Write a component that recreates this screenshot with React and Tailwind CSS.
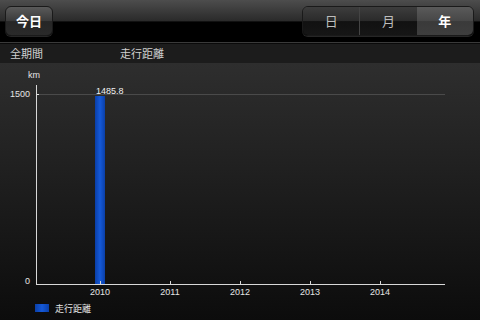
const years = [2010, 2011, 2012, 2013, 2014];

const Chart = () => {
  const x0 = 36;
  const yTop = 31;
  const yBase = 221;
  return (
    <svg width="480" height="257" className="block" style={{ fontFamily: '"Liberation Sans", Arial, sans-serif' }}>
      <defs>
        <linearGradient id="bar" x1="0" x2="1" y1="0" y2="0">
          <stop offset="0" stopColor="#0a3fa8" />
          <stop offset="0.5" stopColor="#1559d8" />
          <stop offset="1" stopColor="#0a3fa8" />
        </linearGradient>
      </defs>
      <text x="28" y="15" fill="#e5e5e5" fontSize="9">km</text>
      <text x="30" y="34" fill="#e5e5e5" fontSize="9" textAnchor="end">1500</text>
      <line x1={x0} x2="445" y1={yTop + 0.5} y2={yTop + 0.5} stroke="#4a4a4a" strokeWidth="1" />
      <line x1={x0} x2={x0 + 3} y1={yTop + 0.5} y2={yTop + 0.5} stroke="#e5e5e5" strokeWidth="1" />
      <text x="30" y="221" fill="#e5e5e5" fontSize="9" textAnchor="end">0</text>
      <rect x="95" y="33" width="10" height={yBase - 33} fill="url(#bar)" />
      <text x="96" y="31" fill="#f0f0f0" fontSize="9">1485.8</text>
      <line x1={x0 + 0.5} x2={x0 + 0.5} y1="22" y2={yBase} stroke="#d8d8d8" strokeWidth="1" />
      <line x1={x0} x2="445" y1={yBase + 0.5} y2={yBase + 0.5} stroke="#d8d8d8" strokeWidth="1" />
      {years.map((y, i) => {
        const cx = 100 + i * 70;
        return (
          <g key={y}>
            <line x1={cx + 0.5} x2={cx + 0.5} y1={yBase - 3} y2={yBase} stroke="#d8d8d8" strokeWidth="1" />
            <text x={cx} y={yBase + 11} fill="#e5e5e5" fontSize="9" textAnchor="middle">{y}</text>
          </g>
        );
      })}
      <rect x="35" y="241" width="14" height="8" fill="url(#bar)" />
      <text x="55" y="249" fill="#e5e5e5" fontSize="9" style={{ fontFamily: '"Noto Sans CJK JP", sans-serif' }}>走行距離</text>
    </svg>
  );
};

export default function App() {
  return (
    <div className="w-[480px] h-[320px] overflow-hidden bg-black" style={{ fontFamily: '"Noto Sans CJK JP", "Liberation Sans", sans-serif' }}>
      <div className="h-[42px] flex items-center justify-between px-[5px] bg-[linear-gradient(to_bottom,#4d4d4d_0%,#2a2a2a_50%,#000_52%,#000_100%)]">
        <button className="h-[30px] w-[48px] rounded-[6px] border border-[#1a1a1a] bg-[linear-gradient(to_bottom,#5a5a5a_0%,#3a3a3a_50%,#262626_52%,#2a2a2a_100%)] text-white text-[13px] font-bold shadow-[0_1px_0_rgba(255,255,255,0.15)]">
          今日
        </button>
        <div className="mr-[1px] h-[30px] w-[172px] flex rounded-[6px] border border-[#1a1a1a] overflow-hidden shadow-[0_1px_0_rgba(255,255,255,0.15)] text-[13px]">
          <div className="flex-1 flex items-center justify-center text-[#bdbdbd] bg-[linear-gradient(to_bottom,#3d3d3d_0%,#2a2a2a_50%,#111_52%,#161616_100%)] border-r border-[#444]">日</div>
          <div className="flex-1 flex items-center justify-center text-[#bdbdbd] bg-[linear-gradient(to_bottom,#3d3d3d_0%,#2a2a2a_50%,#111_52%,#161616_100%)]">月</div>
          <div className="flex-1 flex items-center justify-center text-white font-bold bg-[linear-gradient(to_bottom,#5a5a5a_0%,#474747_50%,#3a3a3a_52%,#3e3e3e_100%)]">年</div>
        </div>
      </div>
      <div className="h-[1px] bg-[#3a3a3a]" />
      <div className="h-[1px] bg-[#0a0a0a]" />
      <div className="h-[19px] bg-[#1c1c1c] flex items-center text-[11px] text-[#d0d0d0]">
        <span className="w-[120px] pl-[10px]">全期間</span>
        <span>走行距離</span>
      </div>
      <div className="h-[257px] bg-[linear-gradient(to_bottom,#2e2e2e_0%,#0c0c0c_100%)]">
        <Chart />
      </div>
    </div>
  );
}
